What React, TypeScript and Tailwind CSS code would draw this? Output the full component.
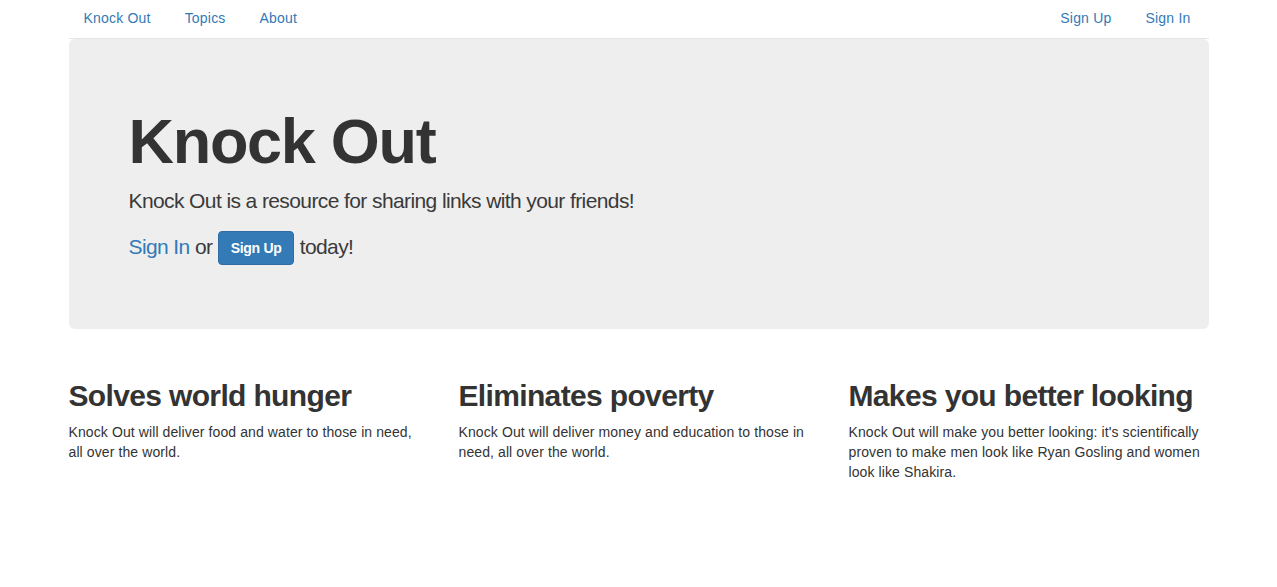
import React from 'react';

const features = [
  {
    title: 'Solves world hunger',
    body: 'Knock Out will deliver food and water to those in need, all over the world.',
  },
  {
    title: 'Eliminates poverty',
    body: 'Knock Out will deliver money and education to those in need, all over the world.',
  },
  {
    title: 'Makes you better looking',
    body: "Knock Out will make you better looking: it's scientifically proven to make men look like Ryan Gosling and women look like Shakira.",
  },
];

const NavLink: React.FC<{ label: string }> = ({ label }) => (
  <a href="#" className="px-[16px] text-[#337ab7] text-[14px] leading-5 tracking-[0.2px] hover:underline">
    {label}
  </a>
);

const App: React.FC = () => {
  return (
    <div className="min-h-screen bg-white text-[#333] font-['Liberation_Sans',Helvetica,Arial,sans-serif]">
      <div className="w-[1170px] mx-auto px-[15px]">
        {/* Header */}
        <nav className="h-[39px] flex items-start justify-between border-b border-[#e5e5e5]">
          <div className="flex gap-[2px] pt-[8px] -ml-px">
            <NavLink label="Knock Out" />
            <NavLink label="Topics" />
            <NavLink label="About" />
          </div>
          <div className="flex gap-[2px] pt-[8px] pr-[2px]">
            <NavLink label="Sign Up" />
            <NavLink label="Sign In" />
          </div>
        </nav>

        {/* Jumbotron */}
        <div className="bg-[#eee] rounded-[6px] px-[60px] pt-[48px] pb-[49px] mb-[30px]">
          <h1 className="mt-[20px] mb-[10px] text-[63px] leading-[1.1] font-bold tracking-[-1.3px]">Knock Out</h1>
          <p className="mb-[15px] text-[21px] leading-[30px] font-light tracking-[-0.6px] text-[#3a3a3a]">
            Knock Out is a resource for sharing links with your friends!
          </p>
          <p className="mb-[15px] text-[21px] leading-[30px] font-light tracking-[-0.6px] text-[#3a3a3a]">
            <a href="#" className="text-[#337ab7]">Sign In</a> or{' '}
            <a
              href="#"
              className="inline-block align-middle px-[12px] py-[6px] text-[14px] leading-5 font-bold tracking-[-0.3px] text-white bg-[#337ab7] border border-[#2e6da4] rounded-[4px]"
            >
              Sign Up
            </a>{' '}
            today!
          </p>
        </div>

        {/* Features */}
        <div className="grid grid-cols-3 -mx-[15px]">
          {features.map((f) => (
            <div key={f.title} className="px-[15px]">
              <h2 className="mt-[20px] mb-[10px] text-[30px] leading-[1.1] font-bold tracking-[-0.65px]">{f.title}</h2>
              <p className="text-[14px] leading-5 mb-[10px] tracking-[0.1px]">{f.body}</p>
            </div>
          ))}
        </div>
      </div>
    </div>
  );
};

export default App;
